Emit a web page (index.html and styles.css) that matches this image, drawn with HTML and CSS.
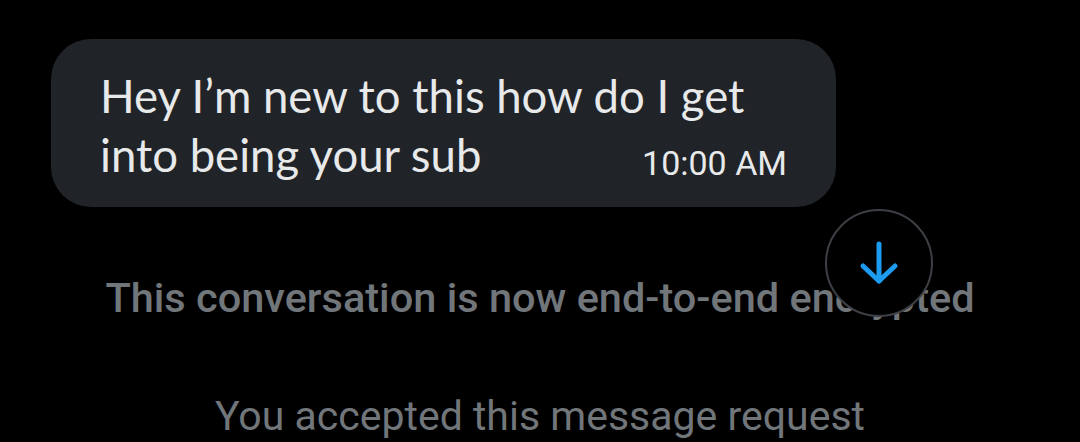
FILE: index.html
```html
<!DOCTYPE html>
<html lang="en">
<head>
    <meta charset="UTF-8">
    <meta name="viewport" content="width=device-width, initial-scale=1.0">
    <title>Chat</title>
    <link rel="stylesheet" href="styles.css">
</head>
<body>

    <div class="chat">
        <!-- Received message -->
        <div class="bubble">
            <p class="text">Hey I’m new to this how do I get<br>into being your sub</p>
            <span class="time">10:00 AM</span>
        </div>

        <p class="notice encrypted">This conversation is now end-to-end encrypted</p>
        <p class="notice accepted">You accepted this message request</p>

        <!-- Scroll to bottom button -->
        <button class="scrollBtn">
            <svg width="44" height="48" viewBox="0 0 44 48" fill="none" stroke="#1d9bf0" stroke-width="5" stroke-linecap="round" stroke-linejoin="round">
                <path d="M22 5 V42"/>
                <path d="M6 27 L22 42 L38 27"/>
            </svg>
        </button>
    </div>

</body>
</html>
```

FILE: styles.css
```css
body {
    margin: 0;
    background-color: #000;
    font-family: Lato, "Noto Sans", sans-serif;
    height: 442px;
    overflow: hidden;
}
.chat {
    position: relative;
    display: flex;
    flex-direction: column;
    padding-top: 39px;
}
.bubble {
    margin-left: 51px;
    width: 785px;
    height: 168px;
    box-sizing: border-box;
    background-color: #202327;
    border-radius: 40px;
    padding: 27px 40px 0 49px;
    position: relative;
}
.text {
    margin: 0;
    color: #e7e9ea;
    font-size: 45.5px;
    line-height: 59px;
}
.time {
    position: absolute;
    right: 49px;
    bottom: 24px;
    color: #e7e9ea;
    font-family: Roboto, sans-serif;
    font-size: 34px;
}
.notice {
    margin: 0;
    text-align: center;
    color: #71767b;
    font-family: Roboto, sans-serif;
}
.encrypted {
    margin-top: 66px;
    font-size: 41.5px;
    font-weight: 500;
}
.accepted {
    margin-top: 70px;
    font-size: 41px;
}
.scrollBtn {
    position: absolute;
    left: 825px;
    top: 209px;
    width: 108px;
    height: 108px;
    border-radius: 50%;
    border: 2px solid #3c4045;
    background-color: #000;
    display: flex;
    justify-content: center;
    align-items: center;
    padding: 0;
}
```
